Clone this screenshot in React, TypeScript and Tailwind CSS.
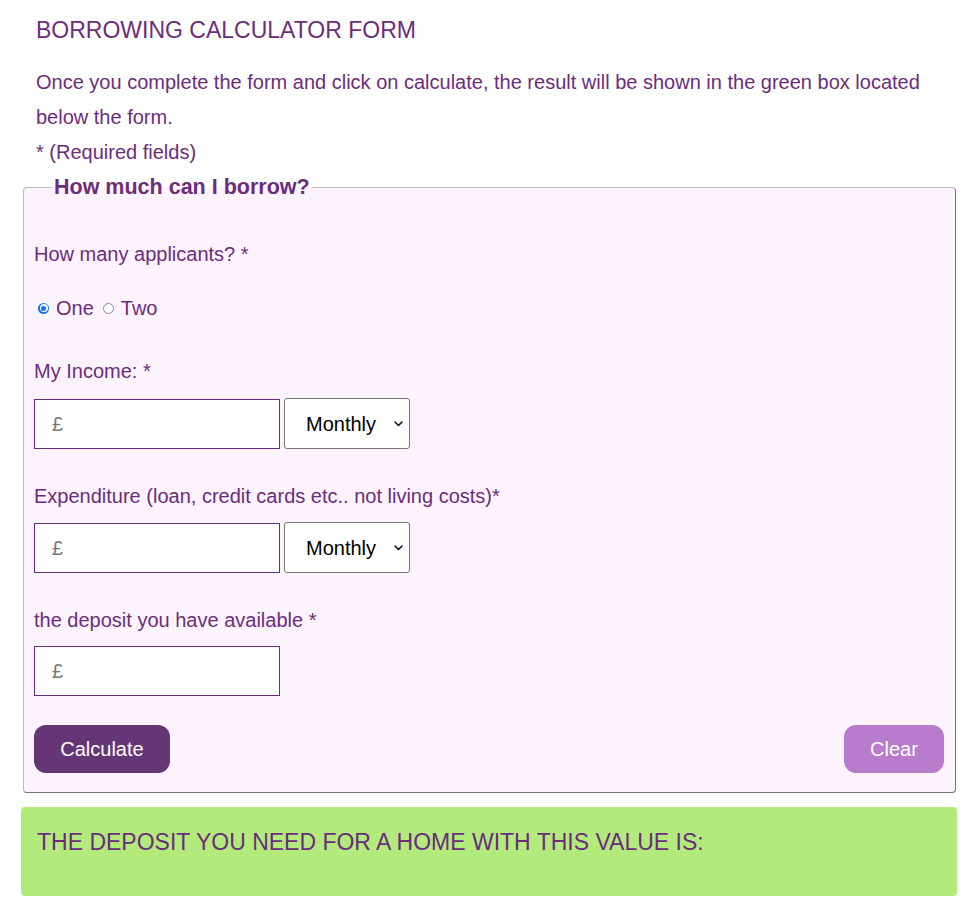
import React from "react";

function Radio({ checked }: { checked: boolean }) {
  return checked ? (
    <span className="relative inline-block w-[11px] h-[11px] rounded-full bg-[#1a73e8]">
      <span className="absolute inset-[1.5px] rounded-full bg-white" />
      <span className="absolute inset-[3px] rounded-full bg-[#1a73e8]" />
    </span>
  ) : (
    <span className="inline-block w-[11px] h-[11px] rounded-full bg-white border border-[#8a8a8a]" />
  );
}

function MoneyInput() {
  return (
    <div className="w-[246px] h-[50px] border border-[#6b2d7b] bg-white flex items-center pl-[17px] text-[20px] text-[#777]">
      £
    </div>
  );
}

function Select() {
  return (
    <div className="w-[126px] h-[51px] border border-[#767676] rounded-[3px] bg-white flex items-center pl-[21px] pr-[6px] text-[20px] text-black">
      <span className="flex-1">Monthly</span>
      <svg width="9" height="6" viewBox="0 0 9 6" className="mt-[1px]">
        <path d="M1 1 L4.5 4.5 L8 1" fill="none" stroke="#111" strokeWidth="1.6" strokeLinecap="round" strokeLinejoin="round" />
      </svg>
    </div>
  );
}

export default function App() {
  return (
    <div
      className="w-[976px] h-[909px] bg-white text-[#6b2d7b] pl-[21px]"
      style={{ fontFamily: '"Liberation Sans", Arial, sans-serif' }}
    >
      <h1 className="pt-[16px] pl-[15px] text-[23px] leading-[28px] font-normal">BORROWING CALCULATOR FORM</h1>
      <div className="mt-[21px] pl-[15px] text-[20px] leading-[35px] w-[920px]">
        <p>Once you complete the form and click on calculate, the result will be shown in the green box located below the form.</p>
        <p>* (Required fields)</p>
      </div>
      <fieldset className="mt-[5px] ml-[2px] w-[933px] bg-[#fcf3fe] border border-t-[#bdbdbd] border-l-[#bdbdbd] border-r-[#747474] border-b-[#747474] rounded-[4px] pl-[10px] pr-[11px] pb-[19px]">
        <legend className="ml-[18px] px-[2px] text-[21.5px] leading-[24px] font-bold">How much can I borrow?</legend>
        <div className="mt-[44px] text-[20px] leading-[22px]">How many applicants? *</div>
        <div className="mt-[32px] text-[20px] leading-[22px] flex items-center">
          <span className="ml-[4px] mr-[7px] flex items-center"><Radio checked /></span>
          <span>One</span>
          <span className="ml-[9px] mr-[7px] flex items-center"><Radio checked={false} /></span>
          <span>Two</span>
        </div>
        <div className="mt-[41px] text-[20px] leading-[22px]">My Income: *</div>
        <div className="mt-[16px] flex items-center gap-[4px]">
          <MoneyInput />
          <Select />
        </div>
        <div className="mt-[36px] text-[20px] leading-[22px]">Expenditure (loan, credit cards etc.. not living costs)*</div>
        <div className="mt-[15px] flex items-center gap-[4px]">
          <MoneyInput />
          <Select />
        </div>
        <div className="mt-[36px] text-[20px] leading-[22px]">the deposit you have available *</div>
        <div className="mt-[15px] flex">
          <MoneyInput />
        </div>
        <div className="mt-[29px] flex justify-between">
          <button className="w-[136px] h-[48px] rounded-[12px] bg-[#643675] text-white text-[20px]">Calculate</button>
          <button className="w-[100px] h-[48px] rounded-[12px] bg-[#b97bcc] text-white text-[20px]">Clear</button>
        </div>
      </fieldset>
      <div className="mt-[14px] w-[936px] h-[89px] bg-[#b2eb7c] rounded-[4px] pt-[21px] pl-[16px] text-[23px] leading-[28px]">
        THE DEPOSIT YOU NEED FOR A HOME WITH THIS VALUE IS:
      </div>
    </div>
  );
}
